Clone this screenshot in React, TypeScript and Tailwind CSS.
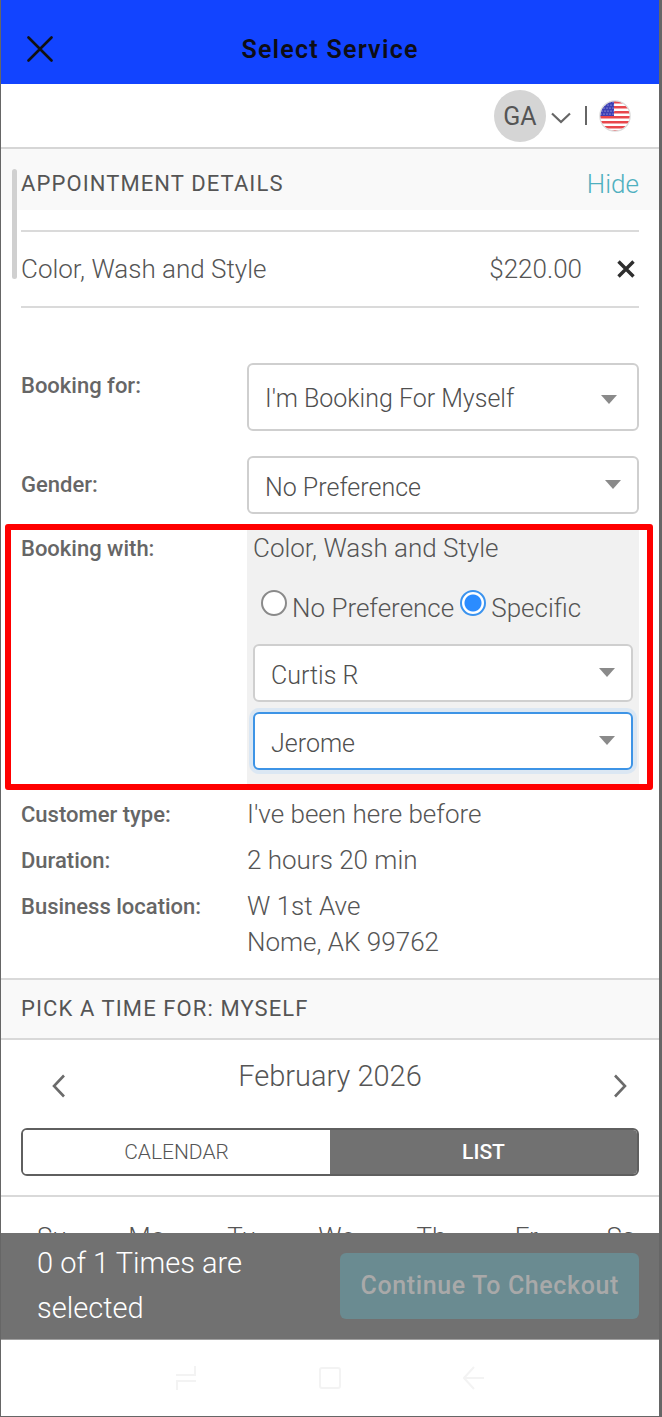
import { useState } from "react";
import type { ReactNode } from "react";

interface SelectBoxProps {
  id: string;
  label?: string;
  options: string[];
  size?: "lg" | "md";
  active?: boolean;
}

function SelectBox({ id, label, options, size = "md", active = false }: SelectBoxProps) {
  const height = size === "lg" ? "h-[68px] pt-1" : "h-[58px] pt-[6px]";
  const border = active
    ? "border-[#3d94e6] shadow-[0_0_0_4px_#dbe7f3]"
    : "border-[#cfcfcf]";
  return (
    <div className="relative">
      <select
        id={id}
        aria-label={label}
        className={`block w-full appearance-none rounded-[6px] border-2 bg-white pl-4 pr-12 text-[25px] font-light text-[#4f4f4f] outline-none ${height} ${border}`}
      >
        {options.map((option) => (
          <option key={option}>{option}</option>
        ))}
      </select>
      <svg
        viewBox="0 0 16 9"
        className={`pointer-events-none absolute h-[9px] w-4 ${size === "lg" ? "right-[22px] top-8" : "right-[18px] top-6"}`}
      >
        <path d="M0 0h16L8 9z" fill="#8a8a8a" />
      </svg>
    </div>
  );
}

function FieldLabel({ children, htmlFor }: { children: ReactNode; htmlFor?: string }) {
  const style = "block pt-px text-[22px] leading-9 font-medium text-[#666]";
  return htmlFor ? (
    <label htmlFor={htmlFor} className={style}>
      {children}
    </label>
  ) : (
    <span className={style}>{children}</span>
  );
}

function Flag() {
  const stars = [];
  for (let row = 0; row < 5; row++) {
    for (let col = 0; col < 5; col++) {
      stars.push([2 + col * 3 + (row % 2), 2 + row * 3]);
    }
  }
  return (
    <svg viewBox="0 0 32 32" className="size-8">
      <defs>
        <clipPath id="flag-round">
          <circle cx="16" cy="16" r="15" />
        </clipPath>
      </defs>
      <g clipPath="url(#flag-round)">
        <rect width="32" height="32" fill="#fff" />
        {[1, 6, 11, 16, 21, 26, 30].map((y) => (
          <rect key={y} y={y} width="32" height="2.5" fill="#e8474c" />
        ))}
        <rect width="15" height="16" fill="#3c3fb4" />
        {stars.map(([x, y], i) => (
          <circle key={i} cx={x} cy={y} r="0.6" fill="#d5d6f2" />
        ))}
      </g>
      <circle cx="16" cy="16" r="15.2" fill="none" stroke="#dcdcdc" strokeWidth="1.2" />
    </svg>
  );
}

const WEEKDAYS = ["Su", "Mo", "Tu", "We", "Th", "Fr", "Sa"];

export default function App() {
  const [mode, setMode] = useState("specific");
  const radio =
    "mt-1 size-[26px] appearance-none rounded-full border-2 border-[#8a8a8a] bg-white checked:border-[#3b93ee] checked:bg-[radial-gradient(circle,#2b8cff_0_8px,#fff_9px)]";

  return (
    <div className="relative border-b border-l border-r-[3px] border-[#666] bg-white font-[Roboto,sans-serif] text-[26px] leading-9 font-light text-[#555]">
      <header className="grid h-[84px] grid-cols-[80px_1fr_80px] items-center bg-[#1244ff] pt-[14px]">
        <button aria-label="Close" className="pl-[26px]">
          <svg viewBox="0 0 26 26" className="size-[26px]">
            <path d="M1.5 1.5l23 23M24.5 1.5l-23 23" stroke="#111" strokeWidth="2.6" strokeLinecap="round" />
          </svg>
        </button>
        <h1 className="pt-[2px] text-center text-[25px] font-semibold tracking-wider text-[#0d0d16]">Select Service</h1>
      </header>

      <div className="flex h-[65px] items-center justify-end border-b-2 border-[#d6d6d6] pr-7">
        <button className="flex items-center gap-[5px]">
          <span className="flex size-[52px] items-center justify-center rounded-full bg-[#d5d5d5] pt-[2px] text-[25px] font-normal">
            GA
          </span>
          <svg viewBox="0 0 20 12" className="mt-1 h-3 w-5" fill="none">
            <path d="M1 1.5l9 8.5 9-8.5" stroke="#666" strokeWidth="2.2" />
          </svg>
        </button>
        <span className="mr-3 ml-[14px] h-[19px] w-[2px] bg-[#666]" />
        <button aria-label="Language">
          <Flag />
        </button>
      </div>

      <section>
        <div className="flex h-[61px] items-center justify-between bg-[#f9f9f9] px-5 pt-2">
          <h2 className="text-[22px] font-normal tracking-wider">APPOINTMENT DETAILS</h2>
          <button className="text-[#4fb0c0]">Hide</button>
        </div>
        <div className="absolute top-[169px] left-[11px] h-[110px] w-[5px] rounded-full bg-[#d0d0d0]" />

        <div className="mx-5 mt-5 flex h-[78px] items-center border-y-2 border-[#dadada]">
          <span>Color, Wash and Style</span>
          <span className="ml-auto">$220.00</span>
          <button aria-label="Remove" className="mr-1 ml-[35px]">
            <svg viewBox="0 0 18 18" className="size-[18px]">
              <path d="M1.5 1.5l15 15M16.5 1.5l-15 15" stroke="#2e2e2e" strokeWidth="3.4" />
            </svg>
          </button>
        </div>

        <div className="mx-5 mt-[55px] grid grid-cols-[226px_1fr]">
          <div className="pt-1">
            <FieldLabel htmlFor="booking-for">Booking for:</FieldLabel>
          </div>
          <SelectBox id="booking-for" size="lg" options={["I'm Booking For Myself", "Someone Else"]} />
        </div>

        <div className="mx-5 mt-[25px] grid grid-cols-[226px_1fr]">
          <div className="pt-[10px]">
            <FieldLabel htmlFor="gender">Gender:</FieldLabel>
          </div>
          <SelectBox id="gender" options={["No Preference", "Female", "Male"]} />
        </div>

        <div className="relative mt-4 grid grid-cols-[226px_1fr] px-5">
          <FieldLabel>Booking with:</FieldLabel>
          <div className="bg-[#f1f1f1] px-[6px] pb-4">
            <p>Color, Wash and Style</p>
            <div className="flex items-start pt-5 pl-2">
              <input
                id="no-preference"
                type="radio"
                name="staff"
                className={radio}
                checked={mode === "any"}
                onChange={() => setMode("any")}
              />
              <label htmlFor="no-preference" className="pt-1 pr-[6px] pl-[5px]">
                No Preference
              </label>
              <input
                id="specific"
                type="radio"
                name="staff"
                className={radio}
                checked={mode === "specific"}
                onChange={() => setMode("specific")}
              />
              <label htmlFor="specific" className="pt-1 pl-[5px]">
                Specific
              </label>
            </div>
            <div className="mt-[18px] space-y-[10px]">
              <SelectBox id="staff-1" label="First staff member" options={["Curtis R", "Jerome"]} />
              <SelectBox id="staff-2" label="Second staff member" options={["Jerome", "Curtis R"]} active />
            </div>
          </div>
          <div className="pointer-events-none absolute -top-[6px] right-[6px] -bottom-1 left-1 rounded-[3px] border-[6px] border-[#ff0000]" />
        </div>

        <dl className="mx-5 mt-[10px] grid grid-cols-[226px_1fr] gap-y-[9px]">
          <dt>
            <FieldLabel>Customer type:</FieldLabel>
          </dt>
          <dd>I've been here before</dd>
          <dt>
            <FieldLabel>Duration:</FieldLabel>
          </dt>
          <dd>2 hours 20 min</dd>
          <dt>
            <FieldLabel>Business location:</FieldLabel>
          </dt>
          <dd>
            W 1st Ave
            <br />
            Nome, AK 99762
          </dd>
        </dl>
      </section>

      <section className="mt-[18px]">
        <h2 className="flex h-[62px] items-center border-y-2 border-[#d9d9d9] bg-[#f9f9f9] px-5 text-[22px] font-normal tracking-wider">
          PICK A TIME FOR: MYSELF
        </h2>

        <div className="grid h-[88px] grid-cols-[116px_1fr_116px]">
          <button aria-label="Previous month" className="flex items-center justify-center pt-1">
            <svg viewBox="0 0 14 24" className="h-6 w-[14px]" fill="none">
              <path d="M12 1.5L2 12l10 10.5" stroke="#6b6b6b" strokeWidth="2.6" />
            </svg>
          </button>
          <h3 className="pt-[18px] text-center text-[29px]">February 2026</h3>
          <button aria-label="Next month" className="flex items-center justify-end pt-1 pr-8">
            <svg viewBox="0 0 14 24" className="h-6 w-[14px]" fill="none">
              <path d="M2 1.5L12 12 2 22.5" stroke="#6b6b6b" strokeWidth="2.6" />
            </svg>
          </button>
        </div>

        <div className="mx-5 grid h-12 grid-cols-2 overflow-hidden rounded-[6px] border-2 border-[#5f5f5f] text-[21px]">
          <button className="bg-white">CALENDAR</button>
          <button className="bg-[#717171] font-medium text-white">LIST</button>
        </div>

        <div className="mt-[19px] grid h-[38px] grid-cols-7 gap-[47px] overflow-hidden border-t-2 border-[#d9d9d9] pt-[22px] pr-[14px] pl-[27px] text-center">
          {WEEKDAYS.map((day) => (
            <span key={day}>{day}</span>
          ))}
        </div>
      </section>

      <footer className="flex h-[107px] items-center justify-between border-b border-[#a0a0a0] bg-[#717171] pr-5 pl-9 text-white">
        <p className="w-[220px] text-[29px] leading-[45px]">0 of 1 Times are selected</p>
        <button disabled className="h-[66px] rounded-[6px] bg-[#6a8b91] px-5 text-[25px] font-medium tracking-wide text-[#a9a9a9]">
          Continue To Checkout
        </button>
      </footer>

      <nav className="flex h-[76px] items-center justify-center gap-[122px] text-[#f3f3f3]">
        <button aria-label="Recent apps">
          <svg viewBox="0 0 22 26" className="h-[26px] w-[22px]" fill="none" stroke="currentColor" strokeWidth="2">
            <path d="M1 10h19V1M21 16H2v9" />
          </svg>
        </button>
        <button aria-label="Home">
          <svg viewBox="0 0 22 26" className="h-[26px] w-[22px]" fill="none" stroke="currentColor" strokeWidth="2">
            <rect x="1" y="3" width="20" height="20" rx="2" />
          </svg>
        </button>
        <button aria-label="Back">
          <svg viewBox="0 0 22 26" className="h-[26px] w-[22px]" fill="none" stroke="currentColor" strokeWidth="2">
            <path d="M21 13H2M11 2L1 13l10 11" />
          </svg>
        </button>
      </nav>
    </div>
  );
}
